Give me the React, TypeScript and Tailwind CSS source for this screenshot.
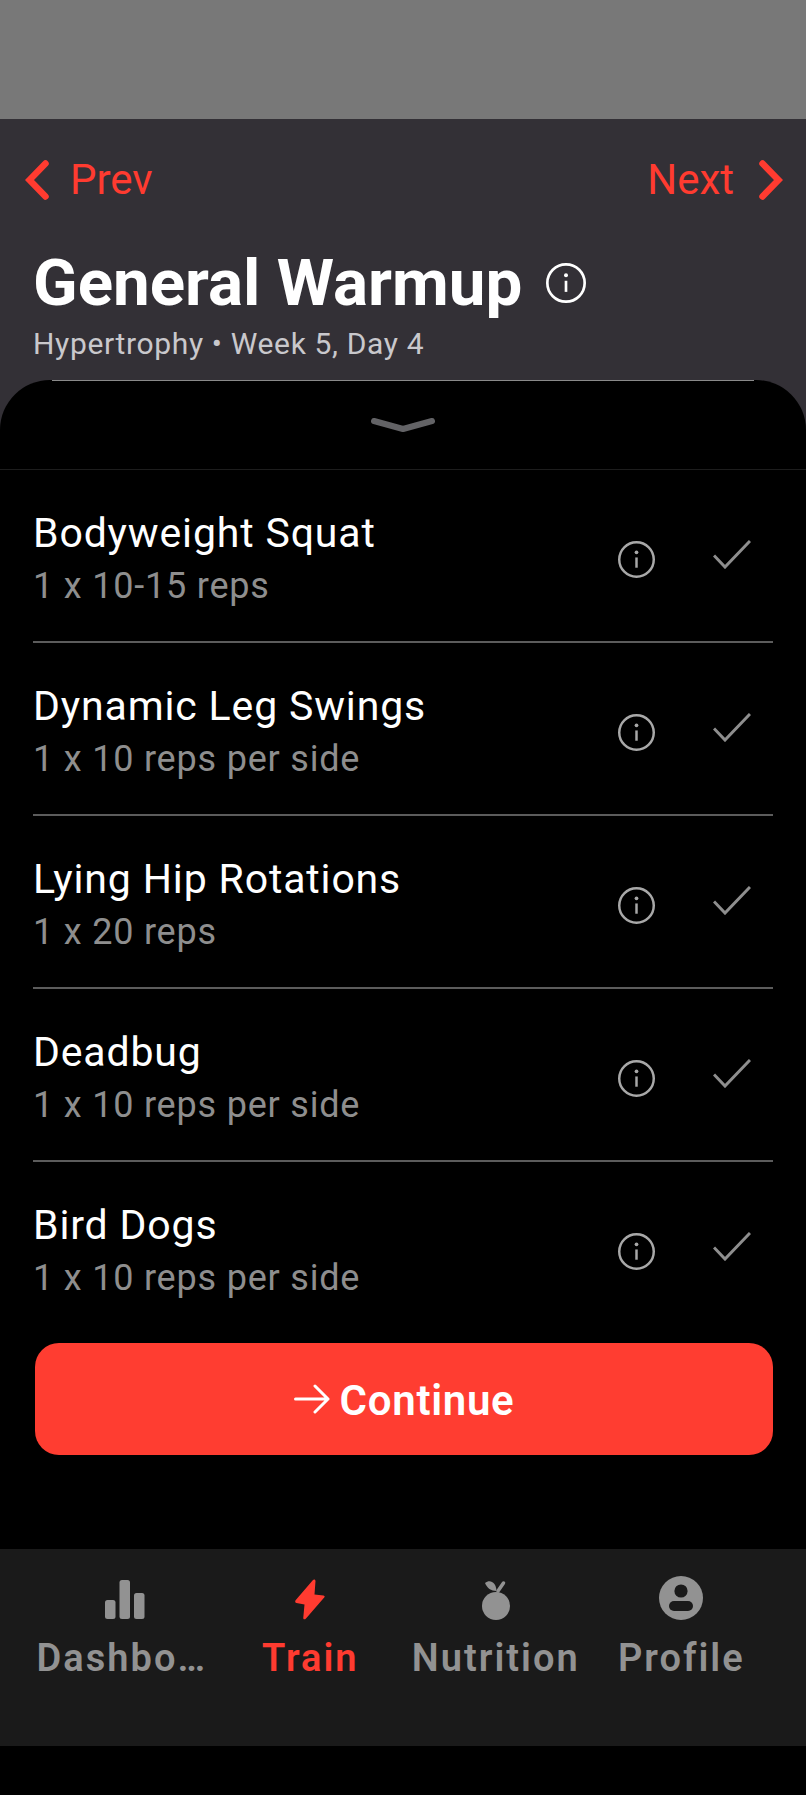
import React from 'react';

const font = { fontFamily: 'Roboto, "Liberation Sans", sans-serif' };

const exercises = [
  { name: 'Bodyweight Squat', detail: '1 x 10-15 reps' },
  { name: 'Dynamic Leg Swings', detail: '1 x 10 reps per side' },
  { name: 'Lying Hip Rotations', detail: '1 x 20 reps' },
  { name: 'Deadbug', detail: '1 x 10 reps per side' },
  { name: 'Bird Dogs', detail: '1 x 10 reps per side' },
];

const InfoIcon: React.FC<{ size: number; className?: string }> = ({ size, className }) => (
  <svg width={size} height={size} viewBox="0 0 36 36" fill="none" stroke="currentColor" className={className}>
    <circle cx="18" cy="18" r="16.8" strokeWidth="2.4" />
    <path d="M18 16V26" strokeWidth="2.4" />
    <circle cx="18" cy="11" r="1.8" fill="currentColor" stroke="none" />
  </svg>
);

const CheckIcon = () => (
  <svg width="38" height="29" viewBox="0 0 38 29" fill="none" stroke="#8e8e8e" strokeWidth="3">
    <path d="M1 15.5 L12 27 L37 1" />
  </svg>
);

const ExerciseRow: React.FC<{ name: string; detail: string; last: boolean }> = ({ name, detail, last }) => (
  <div className={last ? 'h-[173px] mx-[33px] flex items-start' : 'h-[173px] mx-[33px] flex items-start border-b-2 border-[#5c5c5c]'}>
    <div className="flex-1 pt-[37px]">
      <div className="text-[41px] leading-[52px] tracking-[0.85px] text-white">{name}</div>
      <div className="text-[36px] leading-[50px] tracking-[0.8px] text-[#8e8e8e] mt-[2px]">{detail}</div>
    </div>
    <div className="mt-[71px]">
      <InfoIcon size={37} className="text-[#a8a8a8]" />
    </div>
    <div className="mt-[70px] ml-[58px] mr-[22px]">
      <CheckIcon />
    </div>
  </div>
);

const tabClass = 'w-[185.5px] flex flex-col items-center';
const labelClass = 'mt-[13px] whitespace-nowrap text-[38px] leading-[50px] font-semibold tracking-[2px]';

export default function App() {
  return (
    <div style={font} className="w-[806px] h-[1795px] flex flex-col bg-black overflow-hidden">
      <div className="h-[119px] bg-[#787878]" />

      <div className="h-[1430px] flex flex-col bg-[#333036]">
        <header className="h-[261px] shrink-0">
          <div className="flex items-center justify-between pl-[25px] pr-[23px] pt-[42px] h-[80px]">
            <div className="flex items-center text-[#ff3b30]">
              <svg width="24" height="40" viewBox="0 0 24 40" fill="none" stroke="currentColor" strokeWidth="6.5" strokeLinecap="round" strokeLinejoin="miter">
                <path d="M20.5 3.5 L4.5 20 L20.5 36.5" />
              </svg>
              <span className="text-[42px] leading-[50px] ml-[21px]">Prev</span>
            </div>
            <div className="flex items-center text-[#ff3b30]">
              <span className="text-[42px] leading-[50px] mr-[25px]">Next</span>
              <svg width="24" height="40" viewBox="0 0 24 40" fill="none" stroke="currentColor" strokeWidth="6.5" strokeLinecap="round" strokeLinejoin="miter">
                <path d="M3.5 3.5 L19.5 20 L3.5 36.5" />
              </svg>
            </div>
          </div>
          <div className="flex items-center pl-[33px] mt-[46px]">
            <h1 className="text-[65.5px] leading-[76px] font-bold text-white">General Warmup</h1>
            <InfoIcon size={40} className="text-white ml-[24px]" />
          </div>
          <div className="pl-[33px] mt-[4px] text-[30px] leading-[38px] tracking-[0.65px] text-[#c9c8cc]">
            Hypertrophy • Week 5, Day 4
          </div>
        </header>

        <section className="flex-1 bg-black rounded-t-[50px]">
          <div className="h-px mx-[52px] bg-[#8a8a8a]" />
          <div className="h-[89px] flex items-start justify-center pt-[36px] border-b border-[#1d1d1d]">
            <svg width="66" height="16" viewBox="0 0 66 16" fill="none" stroke="#636366" strokeWidth="6" strokeLinecap="round" strokeLinejoin="round">
              <path d="M4 4 L33 12 L62 4" />
            </svg>
          </div>
          {exercises.map((ex, i) => (
            <ExerciseRow key={ex.name} name={ex.name} detail={ex.detail} last={i === exercises.length - 1} />
          ))}
          <button className="mt-[8px] mx-[35px] w-[738px] h-[112px] rounded-[24px] bg-[#ff3d31] flex items-center justify-center text-white">
            <svg width="36" height="30" viewBox="0 0 36 30" fill="none" stroke="currentColor" strokeWidth="3" strokeLinecap="round" strokeLinejoin="round">
              <path d="M1.5 15 H34 M21 2 L34 15 L21 28" />
            </svg>
            <span className="text-[42px] leading-[48px] font-semibold tracking-[0.7px] ml-[10px] mt-[3px]">Continue</span>
          </button>
        </section>
      </div>

      <nav className="h-[197px] bg-[#1a1a1a] flex px-[32px] pt-[25px]">
        <div className={tabClass}>
          <div className="h-[46px] flex items-end">
            <svg width="40" height="40" viewBox="0 0 40 40" fill="#929292">
              <rect x="0" y="20" width="10.5" height="19" rx="2.5" />
              <rect x="14.5" y="0" width="10.5" height="39" rx="2.5" />
              <rect x="29" y="13" width="10.5" height="26" rx="2.5" />
            </svg>
          </div>
          <span className={labelClass + ' -ml-[6px] text-[#929292]'}>Dashbo…</span>
        </div>
        <div className={tabClass}>
          <div className="h-[46px] flex items-end">
            <svg width="30" height="41" viewBox="0 0 30 41" fill="#ff3b30">
              <path d="M18 1 C19 0 20.5 0.5 20.5 2 L19.5 15.5 L28.5 16.5 C29.8 16.8 30 17.5 29.2 18.5 L11 39.5 C9.5 41 8 40.5 8.3 38.5 L9.5 25.5 L1.5 24 C0 23.5 -0.2 22 0.8 21 Z" />
            </svg>
          </div>
          <span className={labelClass + ' text-[#ff3b30]'}>Train</span>
        </div>
        <div className={tabClass}>
          <div className="h-[46px] flex items-end">
            <svg width="28" height="40" viewBox="0 0 28 40" fill="#929292">
              <circle cx="14" cy="26" r="14" />
              <path d="M3 3 C8 -1 14 2 14.5 11 C9 11 5 8 3 3 Z" />
              <path d="M16 11 L21.5 3" stroke="#929292" strokeWidth="3.5" strokeLinecap="round" fill="none" />
            </svg>
          </div>
          <span className={labelClass + ' text-[#929292]'}>Nutrition</span>
        </div>
        <div className={tabClass}>
          <div className="h-[46px] flex items-end">
            <svg width="44" height="44" viewBox="0 0 44 44">
              <circle cx="22" cy="22" r="22" fill="#929292" />
              <circle cx="22" cy="15" r="6.6" fill="#1a1a1a" />
              <rect x="10" y="25" width="24" height="10" rx="5" fill="#1a1a1a" />
            </svg>
          </div>
          <span className={labelClass + ' text-[#929292]'}>Profile</span>
        </div>
      </nav>
    </div>
  );
}
